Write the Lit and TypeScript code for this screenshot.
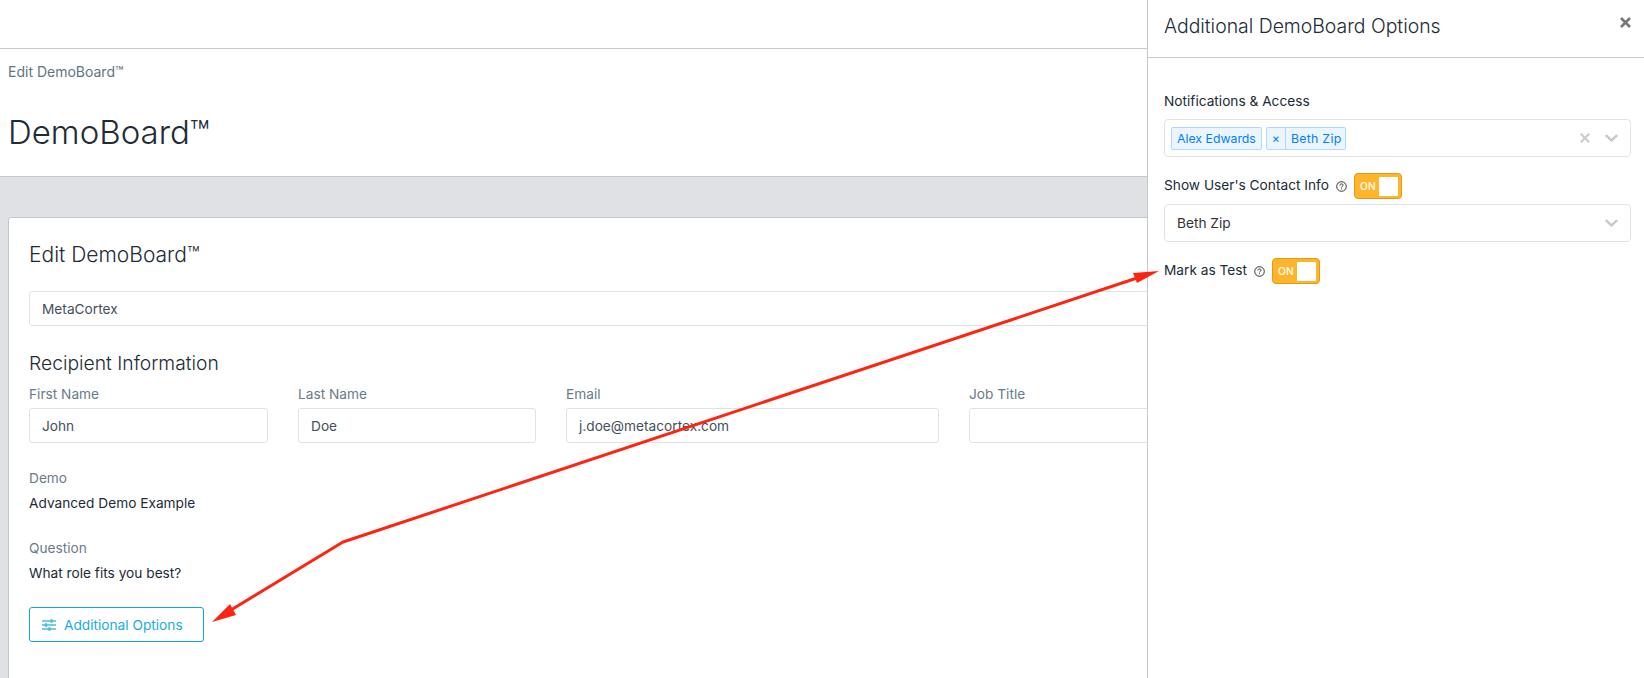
import { LitElement, html, css, svg } from "lit";
import { customElement } from "lit/decorators.js";

const helpIcon = html`<svg class="help" width="11" height="11" viewBox="0 0 11 11" fill="none" stroke="#333" stroke-width="1">
  <circle cx="5.5" cy="5.5" r="4.8"></circle>
  <path d="M3.9 4.5c0-1 .7-1.6 1.6-1.6s1.6.6 1.6 1.3c0 1.1-1.6 1.1-1.6 2.2"></path>
  <path d="M5.5 7.4v.9"></path>
</svg>`;

const chevron = html`<svg class="chev" width="13" height="8" viewBox="0 0 13 8" fill="none" stroke="#c8c8c8" stroke-width="2.4">
  <path d="M.8 1l5.7 5.4L12.2 1"></path>
</svg>`;

const toggle = html`<span class="toggle"><span class="on">ON</span><span class="knob"></span></span>`;

@customElement("app-root")
export class AppRoot extends LitElement {
  static styles = css`
    :host {
      display: block;
      position: relative;
      width: 1644px;
      height: 678px;
      overflow: hidden;
      background: #dfe1e4;
      font-family: Inter, "Liberation Sans", sans-serif;
      font-size: 13.7px;
      color: #212b36;
    }
    .topbar {
      height: 48px;
      background: #fff;
      border-bottom: 1px solid #c4c8cc;
    }
    .pagehead {
      height: 112px;
      background: #fff;
      border-bottom: 1px solid #c4c8cc;
      padding: 15px 8px 0;
    }
    .crumb {
      font-size: 14px;
      line-height: 16px;
      color: #637381;
    }
    h1 {
      margin: 32px 0 0;
      font-size: 33px;
      line-height: 40px;
      font-weight: 300;
    }
    .content {
      padding: 40px 8px 0;
    }
    .card {
      background: #fff;
      border: 1px solid #c4c8cc;
      border-radius: 3px;
      padding: 23px 20px 40px;
      height: 500px;
      box-sizing: border-box;
    }
    h2 {
      margin: 0;
      font-size: 21px;
      line-height: 28px;
      font-weight: 300;
    }
    h3 {
      margin: 0;
      font-size: 19.3px;
      line-height: 24px;
      font-weight: 300;
    }
    .input {
      box-sizing: border-box;
      height: 35px;
      border: 1px solid #dfe3e8;
      border-radius: 3px;
      padding: 0 12px;
      display: flex;
      align-items: center;
      font-size: 13.7px;
      color: #454f5b;
      background: #fff;
    }
    .org {
      margin-top: 22px;
    }
    .recipient {
      margin-top: 25px;
    }
    .row {
      display: grid;
      grid-template-columns: 239px 238px 373px 1fr;
      column-gap: 30px;
      margin-top: 11px;
    }
    .label {
      font-size: 13.7px;
      line-height: 16px;
      color: #6b7a8a;
      margin-bottom: 6px;
    }
    .static .label {
      margin-bottom: 0;
    }
    .static + .static {
      margin-top: 29px;
    }
    .static .value {
      font-size: 13.7px;
      line-height: 16px;
      margin-top: 9px;
      color: #212b36;
    }
    .row + .static {
      margin-top: 27px;
    }
    .optbtn {
      margin-top: 26px;
      box-sizing: border-box;
      width: 175px;
      height: 35px;
      border: 1px solid #11a7d9;
      border-radius: 3px;
      display: flex;
      align-items: center;
      gap: 8px;
      padding-left: 12px;
      color: #17acdd;
      font-size: 13.7px;
    }
    .panel {
      position: absolute;
      top: 0;
      right: 0;
      bottom: 0;
      width: 497px;
      box-sizing: border-box;
      background: #fff;
      border-left: 1px solid #c4c8cc;
    }
    .panelhead {
      height: 58px;
      box-sizing: border-box;
      border-bottom: 1px solid #c4c8cc;
      padding: 12px 13px 0 16px;
      display: flex;
      justify-content: space-between;
    }
    .panelhead .title {
      font-size: 19.4px;
      line-height: 28px;
      font-weight: 300;
    }
    .close {
      margin-top: 5px;
    }
    .panelbody {
      padding: 35px 13px 0 16px;
    }
    .plabel {
      font-size: 13.7px;
      line-height: 16px;
      color: #212b36;
      display: flex;
      align-items: center;
    }
    .ltxt {
      margin-bottom: 2px;
    }
    .select {
      box-sizing: border-box;
      height: 38px;
      margin-top: 10px;
      border: 1px solid #dfe3e8;
      border-radius: 4px;
      display: flex;
      align-items: center;
      padding: 0 12px 0 6px;
      gap: 4px;
      font-size: 13.7px;
    }
    .select.single {
      padding-left: 12px;
      margin-top: 5px;
      color: #333;
    }
    .chip {
      display: flex;
      align-items: stretch;
      height: 23px;
      box-sizing: border-box;
      border: 1px solid rgba(0, 126, 255, 0.24);
      border-radius: 2px;
      background: rgba(0, 126, 255, 0.08);
      color: #007eff;
      font-size: 12.3px;
      line-height: 21px;
    }
    .chip .txt {
      padding: 0 5px;
    }
    .chip .x {
      width: 18px;
      text-align: center;
      border-right: 1px solid rgba(0, 126, 255, 0.24);
    }
    .chip .txt.wide {
      letter-spacing: 0.3px;
      padding-right: 4px;
    }
    .spacer {
      flex: 1;
    }
    .clear {
      margin-right: 11px;
      display: block;
    }
    .chev {
      display: block;
    }
    .toggleRow {
      margin-top: 16px;
      height: 26px;
    }
    .markRow {
      margin-top: 16px;
      height: 26px;
    }
    .help {
      margin-left: 7px;
      margin-right: 7px;
    }
    .toggle {
      box-sizing: border-box;
      width: 48px;
      height: 26px;
      border: 1px solid #e09a17;
      border-radius: 4px;
      background: #ffb52b;
      display: flex;
      align-items: center;
      justify-content: space-between;
      padding: 2px 3px 2px 5px;
    }
    .on {
      font-size: 10.2px;
      font-weight: 500;
      letter-spacing: 0.3px;
      color: #fff;
    }
    .knob {
      width: 19px;
      height: 19px;
      background: #fff;
      border-radius: 1px;
    }
    .arrows {
      position: absolute;
      left: 0;
      top: 0;
      pointer-events: none;
    }
  `;

  render() {
    return html`
      <div class="topbar"></div>
      <div class="pagehead">
        <div class="crumb">Edit DemoBoard™</div>
        <h1>DemoBoard™</h1>
      </div>
      <div class="content">
        <div class="card">
          <h2>Edit DemoBoard™</h2>
          <div class="input org">MetaCortex</div>
          <h3 class="recipient">Recipient Information</h3>
          <div class="row">
            <div><div class="label">First Name</div><div class="input">John</div></div>
            <div><div class="label">Last Name</div><div class="input">Doe</div></div>
            <div><div class="label">Email</div><div class="input">j.doe@metacortex.com</div></div>
            <div><div class="label">Job Title</div><div class="input"></div></div>
          </div>
          <div class="static">
            <div class="label">Demo</div>
            <div class="value">Advanced Demo Example</div>
          </div>
          <div class="static">
            <div class="label">Question</div>
            <div class="value">What role fits you best?</div>
          </div>
          <div class="optbtn">
            <svg width="14" height="12" viewBox="0 0 14 12" fill="none" stroke="#4dbbe3" stroke-width="1.4">
              <path d="M0 2h14M0 6h14M0 10h14"></path>
              <path d="M9.5 .3v3.4M4 4.3v3.4M7.5 8.3v3.4" stroke-width="2.4"></path>
            </svg>
            <span>Additional Options</span>
          </div>
        </div>
      </div>

      <aside class="panel">
        <div class="panelhead">
          <div class="title">Additional DemoBoard Options</div>
          <svg class="close" width="11" height="11" viewBox="0 0 11 11" stroke="#777" stroke-width="2.6">
            <path d="M1 1l9 9M10 1l-9 9"></path>
          </svg>
        </div>
        <div class="panelbody">
          <div class="plabel">Notifications &amp; Access</div>
          <div class="select">
            <span class="chip"><span class="txt">Alex Edwards</span></span>
            <span class="chip"><span class="x">×</span><span class="txt wide">Beth Zip</span></span>
            <span class="spacer"></span>
            <svg class="clear" width="10" height="10" viewBox="0 0 10 10" stroke="#ccc" stroke-width="2.2">
              <path d="M.8 .8l8.4 8.4M9.2 .8l-8.4 8.4"></path>
            </svg>
            ${chevron}
          </div>
          <div class="plabel toggleRow"><span class="ltxt">Show User's Contact Info</span> ${helpIcon} ${toggle}</div>
          <div class="select single">Beth Zip<span class="spacer"></span>${chevron}</div>
          <div class="plabel markRow"><span class="ltxt">Mark as Test</span> ${helpIcon} ${toggle}</div>
        </div>
      </aside>

      <svg class="arrows" width="1644" height="678" viewBox="0 0 1644 678">
        ${svg`
          <path d="M1140 277L343 542L226 613" fill="none" stroke="#fb2511" stroke-width="3" stroke-linejoin="round"></path>
          <path d="M1159 271L1133 273L1137 283Z" fill="#fb2511"></path>
          <path d="M212 622L230 604L236 615Z" fill="#fb2511"></path>
        `}
      </svg>
    `;
  }
}
